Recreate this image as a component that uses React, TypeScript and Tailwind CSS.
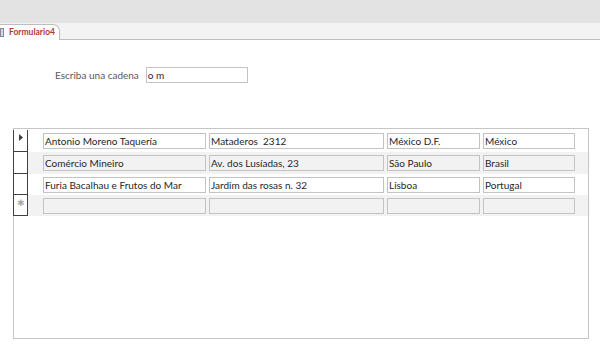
import React from 'react';

const ROWS = [
  ['Antonio Moreno Taquería', 'Mataderos  2312', 'México D.F.', 'México'],
  ['Comércio Mineiro', 'Av. dos Lusíadas, 23', 'São Paulo', 'Brasil'],
  ['Furia Bacalhau e Frutos do Mar', 'Jardim das rosas n. 32', 'Lisboa', 'Portugal'],
  ['', '', '', ''],
];

const COLS = ['w-[163px]', 'w-[175px]', 'w-[93px]', 'w-[92px]'];
const HEIGHTS = ['h-[22px]', 'h-[22px]', 'h-[21px]', 'h-[21px]'];

function Row({ cells, index }: { cells: string[]; index: number }) {
  const alt = index % 2 === 1;
  return (
    <div className={`flex ${HEIGHTS[index]} items-center ${alt ? 'bg-[#f2f2f2]' : 'bg-white'}`}>
      <div className="-ml-px flex h-full w-[15px] shrink-0 items-start justify-center border-b border-l border-r border-[#404040] bg-white pt-[4px] leading-none">
        {index === 0 ? (
          <svg width="4" height="7" viewBox="0 0 4 7">
            <path d="M0 0 L4 3.5 L0 7 Z" fill="#404040" />
          </svg>
        ) : index === 3 ? (
          <span className="-mt-px text-[9px] text-[#aaa]">✱</span>
        ) : null}
      </div>
      <div className="flex gap-[3px] pl-[15px]">
        {cells.map((c, i) => (
          <div
            key={i}
            className={`${COLS[i]} h-[16px] truncate whitespace-pre border border-[#c3c3c3] px-px text-[10px] leading-[14px] text-[#262626] ${alt ? 'bg-[#f2f2f2]' : 'bg-white'}`}
          >
            {c}
          </div>
        ))}
      </div>
    </div>
  );
}

export default function App() {
  return (
    <div className="flex h-[355px] w-[600px] flex-col bg-white font-['Lato',sans-serif]">
      <div className="h-[23px] bg-[#e3e3e3]" />
      <div className="flex h-[17px] items-end border-b border-[#bdbdbd] bg-[#f3f3f3]">
        <div className="relative -mb-px flex h-[16px] w-[60px] items-center gap-[5px] rounded-tr-[7px] border-r border-t border-[#bdbdbd] bg-white">
          <div className="h-[9px] w-[4px] border border-[#7a8aa8] bg-[#e8d0d0]" />
          <span className="text-[8.5px] font-bold text-[#b03a2e]">Formulario4</span>
        </div>
      </div>
      <div className="flex items-center gap-[7px] pl-[55px] pt-[27px]">
        <span className="text-[10px] text-[#595959]">Escriba una cadena</span>
        <div className="h-[16px] w-[102px] border border-[#c3c3c3] px-px text-[10px] leading-[14px] text-[#262626]">o m</div>
      </div>
      <div className="ml-[13px] mt-[45px] h-[211px] w-[576px] border border-[#c6c6c6] pt-px">
        {ROWS.map((r, i) => (
          <Row key={i} cells={r} index={i} />
        ))}
      </div>
    </div>
  );
}
